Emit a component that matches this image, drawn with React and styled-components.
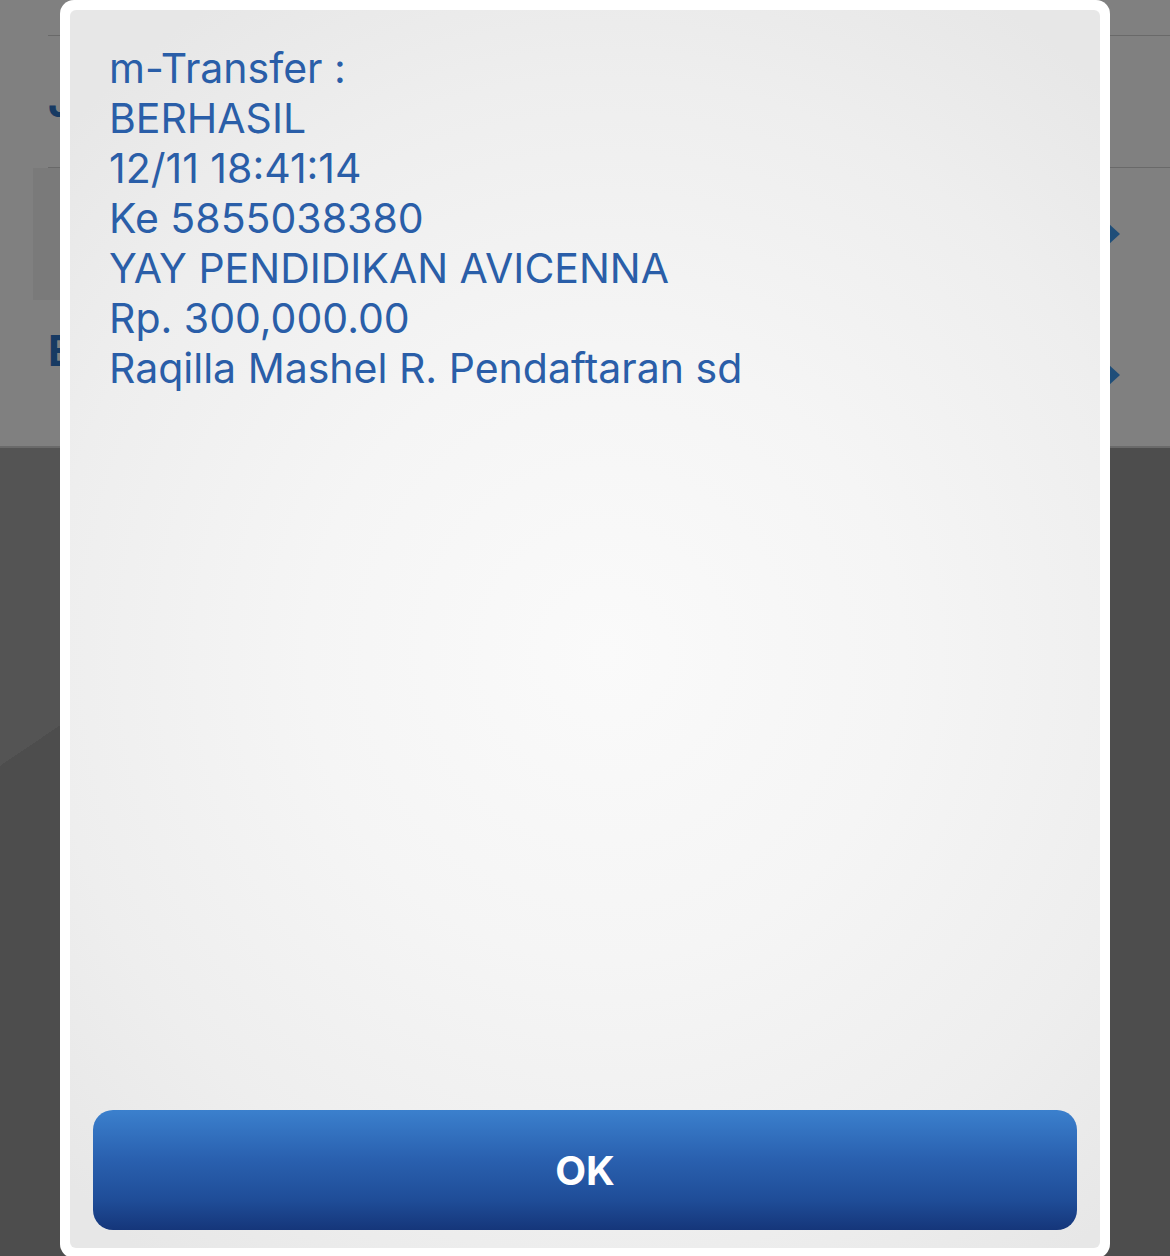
import React from "react";
import styled, { createGlobalStyle } from "styled-components";

const GlobalStyle = createGlobalStyle`
  html, body {
    margin: 0;
    padding: 0;
    background: #4e4e4e;
  }
  body {
    font-family: Inter, "Noto Sans", "Liberation Sans", sans-serif;
  }
`;

const Screen = styled.div`
  position: relative;
  width: 1170px;
  height: 1256px;
  overflow: hidden;
  display: flex;
  flex-direction: column;
`;

const ListArea = styled.div`
  background: #808080;
  border-bottom: 2px solid #6a6a6a;
  display: flex;
  flex-direction: column;
`;

const Row = styled.div`
  height: ${(p) => p.h}px;
  margin-left: ${(p) => (p.box ? 33 : 48)}px;
  border-bottom: ${(p) => (p.line ? "1px solid #696969" : "none")};
  display: flex;
  align-items: ${(p) => (p.top ? "flex-start" : "center")};
  justify-content: space-between;
  box-sizing: border-box;
  padding-top: ${(p) => p.pt || 0}px;
`;

const BoxCell = styled.div`
  width: 90px;
  align-self: stretch;
  background: #7a7a7a;
`;

const RowTitle = styled.span`
  font-size: 42px;
  font-weight: 700;
  color: #173a63;
  line-height: 1;
`;

const Arrow = styled.svg`
  width: 14px;
  height: 22px;
  margin-right: 48px;
  margin-top: ${(p) => p.mt || 0}px;
`;

const DarkArea = styled.div`
  flex: 1;
  background: linear-gradient(146deg, #545454 19.9%, #4d4d4d 19.9%);
`;

const Modal = styled.div`
  position: absolute;
  top: 0;
  left: 60px;
  width: 1050px;
  height: 1258px;
  box-sizing: border-box;
  padding: 10px;
  background: #ffffff;
  border-radius: 14px;
`;

const Panel = styled.div`
  height: 100%;
  box-sizing: border-box;
  border-radius: 6px;
  padding: 33px 23px 18px;
  display: flex;
  flex-direction: column;
  background: radial-gradient(
    ellipse 72% 62% at 52% 52%,
    #fafafa 0%,
    #f5f5f5 40%,
    #eeeeee 75%,
    #e7e7e7 100%
  );
`;

const Message = styled.div`
  padding-left: 16px;
  color: #2a5ea8;
  font-size: 41px;
  line-height: 50px;
`;

const OkButton = styled.button`
  margin-top: auto;
  height: 120px;
  width: 100%;
  border: none;
  border-radius: 20px;
  background: linear-gradient(180deg, #3b80cd 0%, #2a61b0 40%, #1f4d98 75%, #15367a 100%);
  color: #ffffff;
  font-family: Inter, "Noto Sans", "Liberation Sans", sans-serif;
  font-size: 40px;
  font-weight: 700;
  cursor: pointer;
`;

const lines = [
  "m-Transfer :",
  "BERHASIL",
  "12/11 18:41:14",
  "Ke 5855038380",
  "YAY PENDIDIKAN AVICENNA",
  "Rp. 300,000.00",
  "Raqilla Mashel R. Pendaftaran sd",
];

const ArrowIcon = ({ mt }) => (
  <Arrow viewBox="0 0 14 22" mt={mt}>
    <polygon points="0,0 12,11 0,22" fill="#1f4e79" />
  </Arrow>
);

const App = () => {
  return (
    <>
      <GlobalStyle />
      <Screen>
        <ListArea>
          <Row h={36} line />
          <Row h={132} line>
            <RowTitle>J</RowTitle>
          </Row>
          <Row h={132} box>
            <BoxCell />
            <ArrowIcon />
          </Row>
          <Row h={146} top pt={30} line={false}>
            <RowTitle>E</RowTitle>
            <ArrowIcon mt={34} />
          </Row>
        </ListArea>
        <DarkArea />
        <Modal>
          <Panel>
            <Message>
              {lines.map((l, i) => (
                <div key={i}>{l}</div>
              ))}
            </Message>
            <OkButton type="button">OK</OkButton>
          </Panel>
        </Modal>
      </Screen>
    </>
  );
};

export default App;
